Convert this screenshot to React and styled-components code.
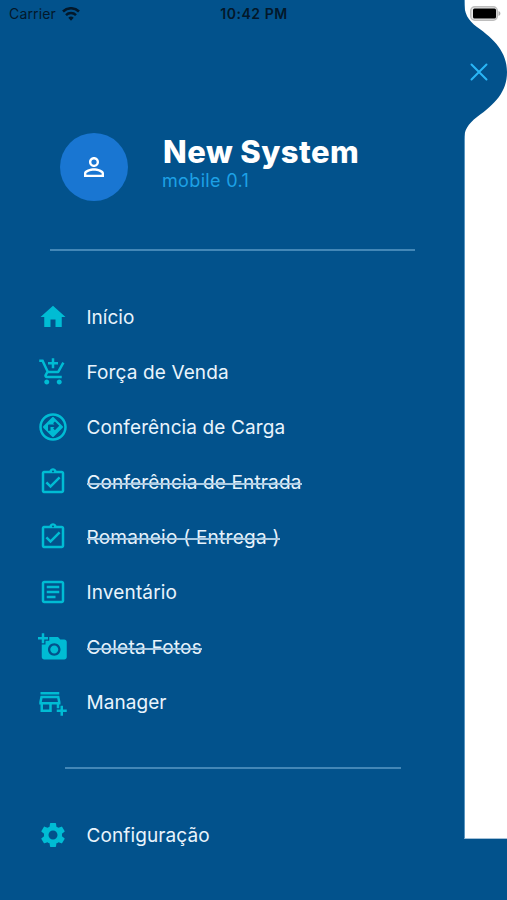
import styled, { createGlobalStyle } from 'styled-components';
import {
    MdAddAPhoto,
    MdAddShoppingCart,
    MdHome,
    MdOutlineAddBusiness,
    MdOutlineArticle,
    MdOutlineAssignmentTurnedIn,
    MdOutlineAssistantDirection,
    MdPersonOutline,
    MdSettings,
} from 'react-icons/md';

const GlobalStyle = createGlobalStyle`
  * {
    box-sizing: border-box;
  }
  body {
    margin: 0;
    background: #02528c;
    font-family: Inter, 'Liberation Sans', sans-serif;
  }
`;

const Screen = styled.div`
  position: relative;
  display: grid;
  grid-template-columns: 464px 1fr;
  width: 507px;
  height: 900px;
  overflow: hidden;
  background: #02528c;
`;

const StatusBar = styled.header`
  position: absolute;
  inset: 0 0 auto;
  z-index: 2;
  display: grid;
  grid-template-columns: 1fr auto 1fr;
  align-items: center;
  height: 27px;
  padding: 0 6px 0 9px;
  color: #03182a;
  font-size: 14px;
`;

const Carrier = styled.div`
  display: flex;
  align-items: center;
  gap: 6px;
  letter-spacing: 0.15px;
`;

const Clock = styled.time`
  margin-right: 2px;
  font-weight: 600;
  letter-spacing: 0.55px;
`;

const BatteryIcon = styled.svg`
  justify-self: end;
`;

const Drawer = styled.nav`
  display: flex;
  flex-direction: column;
  padding: 132px 0 0;
`;

const Profile = styled.div`
  display: flex;
  gap: 35px;
  height: 70px;
  padding-left: 60px;
`;

const Avatar = styled.div`
  display: flex;
  align-items: center;
  justify-content: center;
  width: 68px;
  height: 68px;
  margin-top: 1px;
  border-radius: 50%;
  background: #1976d2;
  color: #fff;
  font-size: 30px;
`;

const Title = styled.h1`
  margin: 2px 0 0;
  color: #fff;
  font-size: 31px;
  font-weight: 800;
  letter-spacing: 0.45px;
  line-height: 35px;
  white-space: nowrap;
`;

const Version = styled.p`
  margin: 0 0 0 -1px;
  color: #1da1e6;
  font-size: 18px;
  letter-spacing: 0.35px;
  line-height: 23px;
`;

const Divider = styled.hr`
  width: ${({ $width }) => $width}px;
  height: 2px;
  margin: ${({ $margin }) => $margin};
  border: 0;
  background: #4387b7;
`;

const Menu = styled.ul`
  margin: 0;
  padding: 0 0 0 38px;
  list-style: none;
`;

const MenuItem = styled.li`
  display: flex;
  align-items: center;
  gap: 18.5px;
  height: 55px;
  color: #e9f4fc;
  font-size: 19px;
  white-space: nowrap;

  svg {
    flex: none;
    width: 30px;
    height: 30px;
    color: #00bcd4;
  }
`;

const Label = styled.span`
  position: relative;
  padding-top: 1px;
  letter-spacing: ${({ $spacing }) => $spacing}px;

  /* the strike sits a little under the middle of the x-height */
  &::after {
    content: '';
    display: ${({ $disabled }) => ($disabled ? 'block' : 'none')};
    position: absolute;
    top: 13px;
    left: 0;
    right: 0;
    height: 2px;
    background: #a9cae3;
  }
`;

const Page = styled.main`
  position: relative;
  height: 839px;
  border-left: 1px solid #5a96c1;
  border-bottom: 1px solid #a3c1d8;
  background: #fff;
`;

const Bulge = styled.svg`
  position: absolute;
  top: 0;
  left: -1px;
`;

const CloseButton = styled.button`
  position: absolute;
  top: 63px;
  left: 5px;
  display: flex;
  padding: 0;
  border: 0;
  background: none;
  color: #29b6f6;
`;

const items = [
    { label: 'Início', icon: MdHome },
    { label: 'Força de Venda', icon: MdAddShoppingCart, spacing: 0.12 },
    { label: 'Conferência de Carga', icon: MdOutlineAssistantDirection, spacing: 0.12 },
    { label: 'Conferência de Entrada', icon: MdOutlineAssignmentTurnedIn, spacing: 0.15, disabled: true },
    { label: 'Romaneio ( Entrega )', icon: MdOutlineAssignmentTurnedIn, spacing: 0.26, disabled: true },
    { label: 'Inventário', icon: MdOutlineArticle, spacing: 0.15 },
    { label: 'Coleta Fotos', icon: MdAddAPhoto, spacing: 0.24, disabled: true },
    { label: 'Manager', icon: MdOutlineAddBusiness, spacing: 0.05 },
];

function Wifi() {
    return (
        <svg width="18" height="14" viewBox="0 0 18 14" fill="none" stroke="currentColor" strokeWidth="2.5">
            <path d="M1 4.5a11.4 11.4 0 0 1 16 0" />
            <path d="M4 8.1a7.2 7.2 0 0 1 10 0" />
            <path d="M6.3 10.7a3.9 3.9 0 0 1 5.4 0L9 13.7z" fill="currentColor" stroke="none" />
        </svg>
    );
}

function Battery() {
    return (
        <BatteryIcon width="31" height="15" viewBox="0 0 31 15">
            <rect x="0.75" y="0.75" width="26.5" height="13.5" rx="4" fill="#e8e8e8" stroke="#bdbdbd" strokeWidth="1.5" />
            <rect x="3" y="2.5" width="23" height="10" rx="1.5" fill="#000" />
            <path d="M28.5 5v5c1.2-.5 1.9-1.4 1.9-2.5S29.7 5.5 28.5 5z" fill="#aaa" />
        </BatteryIcon>
    );
}

function Cross() {
    return (
        <svg width="18" height="18" viewBox="0 0 18 18" stroke="currentColor" strokeWidth="2" strokeLinecap="round">
            <path d="M1.5 1.5l15 15M16.5 1.5l-15 15" />
        </svg>
    );
}

export default function App() {
    return (
        <Screen>
            <GlobalStyle />
            <StatusBar>
                <Carrier>
                    Carrier
                    <Wifi />
                </Carrier>
                <Clock>10:42 PM</Clock>
                <Battery />
            </StatusBar>
            <Drawer>
                <Profile>
                    <Avatar>
                        <MdPersonOutline />
                    </Avatar>
                    <div>
                        <Title>New System</Title>
                        <Version>mobile 0.1</Version>
                    </div>
                </Profile>
                <Divider $width={365} $margin="47px 0 38px 50px" />
                <Menu>
                    {items.map(({ label, icon: Icon, spacing = 0, disabled }) => (
                        <MenuItem key={label}>
                            <Icon />
                            <Label $disabled={disabled} $spacing={spacing}>{label}</Label>
                        </MenuItem>
                    ))}
                </Menu>
                <Divider $width={336} $margin="38px 0 38px 65px" />
                <Menu>
                    <MenuItem>
                        <MdSettings />
                        <Label $spacing={0.1}>Configuração</Label>
                    </MenuItem>
                </Menu>
            </Drawer>
            <Page>
                <Bulge width="43" height="142" viewBox="0 0 43 142">
                    <path
                        d="M0 0C0 14 4 20 13 27C30 39 43 52 43 72C43 92 31 104 13 117C4 124 0 130 0 140Z"
                        fill="#02528c"
                    />
                </Bulge>
                <CloseButton aria-label="Fechar">
                    <Cross />
                </CloseButton>
            </Page>
        </Screen>
    );
}
